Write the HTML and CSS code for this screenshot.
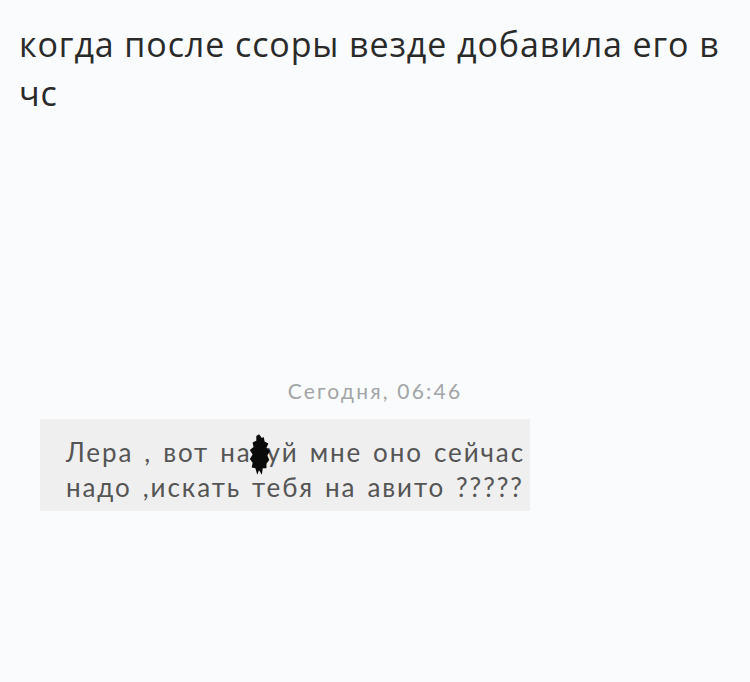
FILE: index.html
```html
<!DOCTYPE html>
<html lang="ru">
<head>
    <meta charset="UTF-8">
    <meta name="viewport" content="width=device-width, initial-scale=1.0">
    <title>чс</title>
    <link rel="stylesheet" href="styles.css">
</head>
<body>

<div class="caption">
    <p>когда после ссоры везде добавила его в чс</p>
</div>

<div class="chat">
    <div class="chat-date">Сегодня, 06:46</div>

    <div class="message">
        <p>Лера , вот на<span class="censor">х<svg class="blot" viewBox="0 0 26 46"><path d="M12 1 L15 5 L17 4 L18 9 L22 11 L20 16 L24 19 L21 24 L23 29 L20 33 L20 38 L16 38 L15 45 L12 40 L10 45 L8 38 L4 37 L5 32 L2 28 L5 23 L2 18 L6 15 L5 10 L9 8 L9 3 Z" /></svg></span>уй мне оно сейчас надо ,искать тебя на авито ?????</p>
    </div>
</div>

</body>
</html>
```

FILE: styles.css
```css
body {
    margin: 0;
    background-color: #f9fbfc;
    font-family: "Open Sans", Arial, sans-serif;
    color: #2a2a2a;
}

.caption {
    padding: 20px 20px 0 19px;
}

.caption p {
    margin: 0;
    font-size: 34px;
    line-height: 49px;
    letter-spacing: 0.9px;
}

.chat {
    padding-top: 260px;
}

.chat-date {
    text-align: center;
    font-family: Lato, "Open Sans", sans-serif;
    font-size: 21px;
    line-height: 25px;
    letter-spacing: 2.2px;
    color: #a3a5a7;
    margin-bottom: 16px;
}

.message {
    margin-left: 40px;
    width: 490px;
    background-color: #efefef;
    padding: 16px 0 6px 26px;
    box-sizing: border-box;
}

.message p {
    margin: 0;
    font-family: Lato, "Open Sans", sans-serif;
    font-size: 26px;
    line-height: 35px;
    letter-spacing: 1.9px;
    word-spacing: 2.5px;
    color: #555555;
}

.censor {
    position: relative;
}

.blot {
    position: absolute;
    left: -4px;
    top: -3px;
    width: 24px;
    height: 43px;
    fill: #0a0a0a;
}
```
